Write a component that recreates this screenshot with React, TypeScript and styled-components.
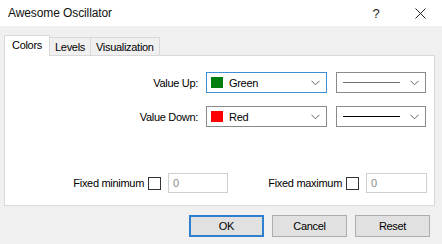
import React, { useState } from "react";
import styled, { createGlobalStyle } from "styled-components";

const GlobalStyle = createGlobalStyle`
  html, body {
    margin: 0;
    padding: 0;
    background: #f0f0f0;
  }
  body {
    font-family: "Liberation Sans", Arial, sans-serif;
    font-size: 11px;
    letter-spacing: -0.3px;
    color: #000;
  }
`;

const Window = styled.div`
  width: 442px;
  height: 244px;
  display: flex;
  flex-direction: column;
  background: #f0f0f0;
  overflow: hidden;
`;

const TitleBar = styled.div`
  height: 26px;
  display: flex;
  align-items: center;
  background: #fff;
  padding-left: 8px;
`;

const Title = styled.span`
  flex: 1;
  font-size: 12px;
  letter-spacing: -0.1px;
  color: #111;
`;

const TitleButton = styled.button`
  width: 44px;
  height: 26px;
  border: none;
  background: transparent;
  padding: 0;
  display: flex;
  align-items: center;
  justify-content: center;
  font-family: "Liberation Sans", Arial, sans-serif;
  font-size: 13px;
  color: #222;
`;

const Body = styled.div`
  padding: 8px 7px 0 4px;
  display: flex;
  flex-direction: column;
`;

const TabBar = styled.div`
  display: flex;
  align-items: flex-end;
  height: 21px;
`;

const Tab = styled.div<{ $active?: boolean }>`
  height: ${(p) => (p.$active ? 21 : 18)}px;
  padding: 0 ${(p) => (p.$active ? 7 : 5)}px;
  display: flex;
  align-items: center;
  box-sizing: border-box;
  border: 1px solid #d9d9d9;
  border-bottom: none;
  margin-left: ${(p) => (p.$active ? 0 : -1)}px;
  background: ${(p) => (p.$active ? "#fff" : "#f0f0f0")};
  position: relative;
  z-index: ${(p) => (p.$active ? 1 : 0)};
  margin-bottom: ${(p) => (p.$active ? -1 : 0)}px;
  padding-bottom: ${(p) => (p.$active ? 3 : 0)}px;
`;

const Panel = styled.div`
  height: 151px;
  box-sizing: border-box;
  background: #fff;
  border: 1px solid #d9d9d9;
  padding-top: 16px;
  display: flex;
  flex-direction: column;
`;

const ColorGrid = styled.div`
  display: grid;
  grid-template-columns: 193px 121px 91px;
  grid-auto-rows: 21px;
  column-gap: 8px;
  row-gap: 13px;
  align-items: center;
`;

const Label = styled.span`
  text-align: right;
`;

const Select = styled.div<{ $focused?: boolean; $narrow?: boolean }>`
  height: 21px;
  box-sizing: border-box;
  border: 1px solid ${(p) => (p.$focused ? "#3f8fd6" : "#8a8a8a")};
  background: #fff;
  display: flex;
  align-items: center;
  padding: 0 6px 0 4px;
  margin-left: ${(p) => (p.$narrow ? 1 : 0)}px;
`;

const Swatch = styled.span<{ $color: string }>`
  width: 12px;
  height: 11px;
  background: ${(p) => p.$color};
  margin-right: 6px;
`;

const SelectText = styled.span`
  flex: 1;
`;

const LineSample = styled.span<{ $color: string }>`
  flex: 1;
  height: 1px;
  background: ${(p) => p.$color};
  margin: 0 10px 0 2px;
`;

const Chevron = () => (
  <svg width="9" height="6" viewBox="0 0 9 6">
    <path d="M0.5 0.8 L4.5 4.8 L8.5 0.8" fill="none" stroke="#666" strokeWidth="1" />
  </svg>
);

const LimitsRow = styled.div`
  margin-top: 46px;
  display: grid;
  grid-template-columns: 223px 199px;
  align-items: center;
`;

const LimitGroup = styled.label`
  display: flex;
  align-items: center;
  justify-content: flex-end;
`;

const CheckBox = styled.span`
  width: 13px;
  height: 13px;
  box-sizing: border-box;
  border: 1px solid #333;
  background: #fff;
  margin: 0 7px 0 4px;
`;

const NumberInput = styled.div<{ $width: number }>`
  width: ${(p) => p.$width}px;
  height: 20px;
  box-sizing: border-box;
  border: 1px solid #cfcfcf;
  padding-left: 4px;
  display: flex;
  align-items: center;
  color: #8c8c8c;
`;

const ButtonRow = styled.div`
  display: flex;
  justify-content: flex-end;
  gap: 8px;
  padding: 9px 5px 0 0;
`;

const Button = styled.button<{ $default?: boolean }>`
  width: 75px;
  height: 22px;
  box-sizing: border-box;
  background: #e1e1e1;
  border: 1px solid ${(p) => (p.$default ? "#2f7fd0" : "#adadad")};
  box-shadow: ${(p) => (p.$default ? "inset 0 0 0 1px #2f7fd0" : "none")};
  font-family: "Liberation Sans", Arial, sans-serif;
  font-size: 11px;
  letter-spacing: -0.3px;
  color: #000;
  padding: 0;
`;

const rows = [
  { label: "Value Up:", color: "#007f0e", name: "Green", focused: true, line: "#6e6e6e" },
  { label: "Value Down:", color: "#ff0000", name: "Red", focused: false, line: "#000" },
];

export default function App() {
  const [tab] = useState("Colors");
  return (
    <Window>
      <GlobalStyle />
      <TitleBar>
        <Title>Awesome Oscillator</Title>
        <TitleButton>?</TitleButton>
        <TitleButton>
          <svg width="11" height="11" viewBox="0 0 11 11">
            <path d="M0.5 0.5 L10.5 10.5 M10.5 0.5 L0.5 10.5" stroke="#222" strokeWidth="1" />
          </svg>
        </TitleButton>
      </TitleBar>
      <Body>
        <TabBar>
          {["Colors", "Levels", "Visualization"].map((t) => (
            <Tab key={t} $active={t === tab}>
              {t}
            </Tab>
          ))}
        </TabBar>
        <Panel>
          <ColorGrid>
            {rows.map((r) => (
              <React.Fragment key={r.label}>
                <Label>{r.label}</Label>
                <Select $focused={r.focused}>
                  <Swatch $color={r.color} />
                  <SelectText>{r.name}</SelectText>
                  <Chevron />
                </Select>
                <Select $narrow>
                  <LineSample $color={r.line} />
                  <Chevron />
                </Select>
              </React.Fragment>
            ))}
          </ColorGrid>
          <LimitsRow>
            <LimitGroup>
              Fixed minimum
              <CheckBox />
              <NumberInput $width={60}>0</NumberInput>
            </LimitGroup>
            <LimitGroup>
              Fixed maximum
              <CheckBox />
              <NumberInput $width={61}>0</NumberInput>
            </LimitGroup>
          </LimitsRow>
        </Panel>
        <ButtonRow>
          <Button $default>OK</Button>
          <Button>Cancel</Button>
          <Button>Reset</Button>
        </ButtonRow>
      </Body>
    </Window>
  );
}
